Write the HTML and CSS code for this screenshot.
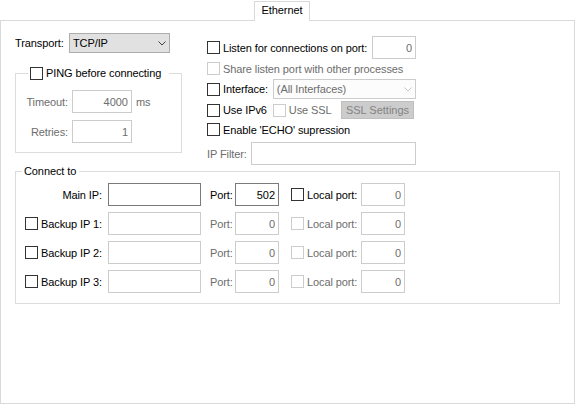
FILE: index.html
```html
<!DOCTYPE html>
<html lang="en">
<head>
  <meta charset="UTF-8">
  <title>Ethernet</title>
  <link rel="stylesheet" href="styles.css">
</head>
<body>
  <div class="tabstrip">
    <div class="tab-fill lead"></div>
    <div class="tab">Ethernet</div>
    <div class="tab-fill rest"></div>
  </div>

  <div class="panel">
    <div class="top">
      <div class="col-left">
        <div class="transport">
          <span class="transport-lbl">Transport:</span>
          <div class="combo">
            <span>TCP/IP</span>
            <svg width="8" height="5" viewBox="0 0 8 5"><path d="M0.5 0.5 L4 4 L7.5 0.5" fill="none" stroke="#404040" stroke-width="1"/></svg>
          </div>
        </div>

        <fieldset class="group ping">
          <legend><label class="check"><input class="cb" type="checkbox"><span>PING before connecting</span></label></legend>
          <div class="ping-grid">
            <span class="lbl dim">Timeout:</span>
            <input class="box" type="text" value="4000" disabled>
            <span class="dim">ms</span>
            <span class="lbl dim">Retries:</span>
            <input class="box" type="text" value="1" disabled>
            <span></span>
          </div>
        </fieldset>
      </div>

      <div class="col-right">
        <div class="row r1">
          <label class="check"><input class="cb" type="checkbox"><span>Listen for connections on port:</span></label>
          <input class="box small push" type="text" value="0" disabled>
        </div>
        <div class="row r2">
          <label class="check dim"><input class="cb" type="checkbox" disabled><span>Share listen port with other processes</span></label>
        </div>
        <div class="row r3">
          <label class="check"><input class="cb" type="checkbox"><span>Interface:</span></label>
          <div class="combo off iface">
            <span>(All Interfaces)</span>
            <svg width="8" height="5" viewBox="0 0 8 5"><path d="M0.5 0.5 L4 4 L7.5 0.5" fill="none" stroke="#c4c4c4" stroke-width="1"/></svg>
          </div>
        </div>
        <div class="row r4">
          <label class="check"><input class="cb" type="checkbox"><span>Use IPv6</span></label>
          <label class="check dim ssl"><input class="cb" type="checkbox" disabled><span>Use SSL</span></label>
          <button class="btn" disabled>SSL Settings</button>
        </div>
        <div class="row r5">
          <label class="check"><input class="cb" type="checkbox"><span>Enable 'ECHO' supression</span></label>
        </div>
        <div class="row r6">
          <span class="dim">IP Filter:</span>
          <input class="box filter" type="text" value="" disabled>
        </div>
      </div>
    </div>

    <fieldset class="group connect">
      <legend>Connect to</legend>
      <div class="crow">
        <span class="cb-cell"></span>
        <span class="ip-lbl">Main IP:</span>
        <input class="box ip" type="text" value="">
        <span class="port-lbl">Port:</span>
        <input class="box small" type="text" value="502">
        <label class="check local"><input class="cb" type="checkbox"><span class="local-lbl">Local port:</span></label>
        <input class="box small" type="text" value="0" disabled>
      </div>
      <div class="crow">
        <span class="cb-cell"><input class="cb" type="checkbox"></span>
        <span class="ip-lbl">Backup IP 1:</span>
        <input class="box ip" type="text" value="" disabled>
        <span class="port-lbl dim">Port:</span>
        <input class="box small" type="text" value="0" disabled>
        <label class="check local dim"><input class="cb" type="checkbox" disabled><span class="local-lbl">Local port:</span></label>
        <input class="box small" type="text" value="0" disabled>
      </div>
      <div class="crow">
        <span class="cb-cell"><input class="cb" type="checkbox"></span>
        <span class="ip-lbl">Backup IP 2:</span>
        <input class="box ip" type="text" value="" disabled>
        <span class="port-lbl dim">Port:</span>
        <input class="box small" type="text" value="0" disabled>
        <label class="check local dim"><input class="cb" type="checkbox" disabled><span class="local-lbl">Local port:</span></label>
        <input class="box small" type="text" value="0" disabled>
      </div>
      <div class="crow">
        <span class="cb-cell"><input class="cb" type="checkbox"></span>
        <span class="ip-lbl">Backup IP 3:</span>
        <input class="box ip" type="text" value="" disabled>
        <span class="port-lbl dim">Port:</span>
        <input class="box small" type="text" value="0" disabled>
        <label class="check local dim"><input class="cb" type="checkbox" disabled><span class="local-lbl">Local port:</span></label>
        <input class="box small" type="text" value="0" disabled>
      </div>
    </fieldset>
  </div>
</body>
</html>
```

FILE: styles.css
```css
body {
  margin: 0;
  background: #fff;
  font-family: "Liberation Sans", Arial, sans-serif;
  font-size: 11px;
  letter-spacing: -0.1px;
  color: #000;
  white-space: nowrap;
}
.tabstrip {
  display: flex;
  height: 21px;
}
.tab-fill {
  border-bottom: 1px solid #d9d9d9;
}
.tab-fill.lead {
  width: 254px;
}
.tab-fill.rest {
  flex: 1;
}
.tab {
  margin-top: 1px;
  width: 56px;
  height: 20px;
  box-sizing: border-box;
  border: 1px solid #d9d9d9;
  border-bottom: none;
  text-align: center;
  line-height: 17px;
}
.panel {
  height: 383px;
  box-sizing: border-box;
  border: 1px solid #d9d9d9;
  border-top: none;
  padding: 12px 14px;
}
.top {
  display: grid;
  grid-template-columns: 167px 209px;
  column-gap: 25px;
  align-items: start;
}
.dim {
  color: #6d6d6d;
}

/* checkboxes and text boxes */
.check {
  display: flex;
  align-items: center;
  gap: 3px;
}
.cb {
  -webkit-appearance: none;
  appearance: none;
  width: 13px;
  height: 13px;
  margin: 0;
  box-sizing: border-box;
  border: 1px solid #333;
  background: #fff;
  flex: none;
}
.cb:disabled {
  border-color: #cccccc;
}
.box {
  box-sizing: border-box;
  height: 23px;
  margin: 0;
  padding: 0 3px;
  border: 1px solid #7a7a7a;
  background: #fff;
  font: inherit;
  color: #000;
  text-align: right;
  outline: none;
}
.box:disabled {
  border-color: #cccccc;
  background: #fff;
  color: #6d6d6d;
}
.box.small {
  width: 44px;
}
.combo {
  box-sizing: border-box;
  height: 20px;
  border: 1px solid #adadad;
  background: #e1e1e1;
  display: flex;
  align-items: center;
  justify-content: space-between;
  padding: 0 3px 0 3px;
}
.combo.off {
  background: #fcfcfc;
  border-color: #cccccc;
  color: #6d6d6d;
}

/* left column */
.transport {
  display: flex;
  align-items: center;
  height: 20px;
}
.transport-lbl {
  width: 54px;
}
.transport .combo {
  width: 101px;
}
fieldset.group {
  margin: 0;
  min-width: 0;
  border: 1px solid #dcdcdc;
}
fieldset.ping {
  margin-top: 13px;
  padding: 10px 0 9px 0;
}
.ping legend {
  margin-left: 12px;
  padding: 0 8px 0 2px;
  height: 14px;
}
.ping legend .check {
  height: 14px;
}
.ping-grid {
  display: grid;
  grid-template-columns: 52px 60px auto;
  column-gap: 4px;
  row-gap: 7px;
  align-items: center;
}
.lbl {
  text-align: right;
}

/* right column */
.col-right {
  padding-top: 3px;
  display: flex;
  flex-direction: column;
}
.row {
  display: flex;
  align-items: center;
}
.r1 { height: 23px; }
.r2 { height: 19px; }
.r3 { height: 22px; }
.r4 { height: 20px; }
.r5 { height: 19px; }
.r6 {
  margin-top: 3px;
  height: 23px;
  gap: 4px;
}
.push {
  margin-left: auto;
}
.iface {
  margin-left: 5px;
  flex: 1;
}
.ssl {
  margin-left: 6px;
}
.btn {
  margin-left: auto;
  margin-right: 2px;
  width: 73px;
  height: 18px;
  padding: 0;
  border: 1px solid #bfbfbf;
  background: #cccccc;
  color: #838383;
  font: inherit;
}
.filter {
  flex: 1;
}

/* connect to */
fieldset.connect {
  padding: 6px 0 10px 0;
}
.connect legend {
  margin-left: 6px;
  padding: 0 3px 0 2px;
  height: 12px;
  line-height: 12px;
}
.crow {
  display: flex;
  align-items: center;
  height: 23px;
  padding-left: 9px;
}
.crow + .crow {
  margin-top: 6px;
}
.cb-cell {
  width: 16px;
  flex: none;
  display: flex;
}
.ip-lbl {
  width: 61px;
  flex: none;
  display: flex;
  justify-content: flex-end;
}
.box.ip {
  margin-left: 6px;
  width: 93px;
}
.port-lbl {
  margin-left: 9px;
  width: 25px;
}
.local {
  margin-left: 12px;
}
.local-lbl {
  width: 54px;
}
```
